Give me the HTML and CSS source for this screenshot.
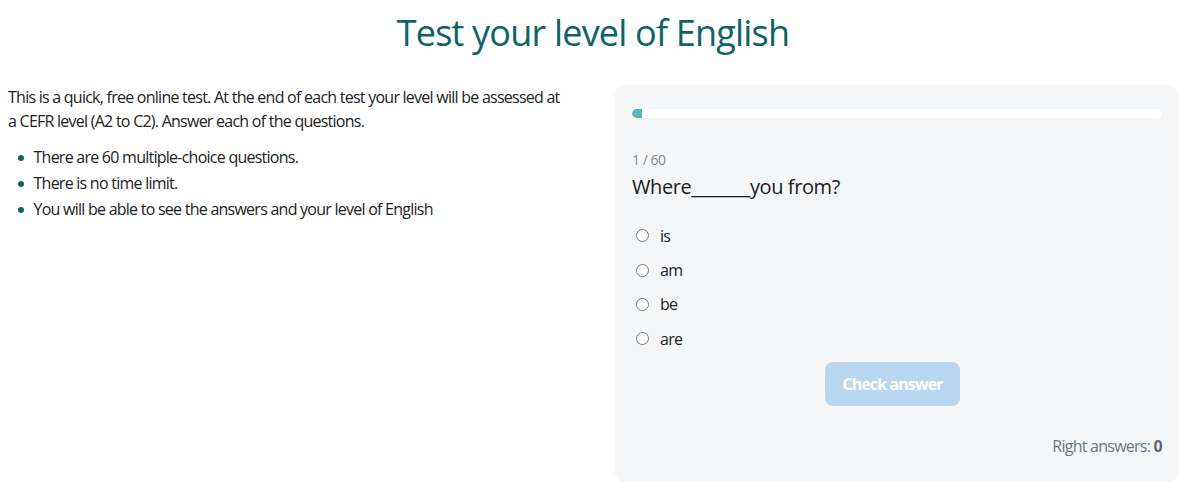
FILE: index.html
```html
<!DOCTYPE html>
<html lang="en">
<head>
<meta charset="utf-8">
<title>Test your level of English</title>
<link rel="stylesheet" href="styles.css">
</head>
<body>
<div class="page">
  <h1 class="title">Test your level of English</h1>
  <div class="columns">
    <div class="intro">
      <p class="lead">This is a quick, free online test. At the end of each test your level will be assessed at a CEFR level (A2 to C2). Answer each of the questions.</p>
      <ul class="facts">
        <li>There are 60 multiple-choice questions.</li>
        <li>There is no time limit.</li>
        <li>You will be able to see the answers and your level of English</li>
      </ul>
    </div>
    <div class="quiz">
      <div class="progress"><div class="progress-fill" style="width: 10px"></div></div>
      <div class="counter">1 / 60</div>
      <div class="question">Where_______you from?</div>
      <div class="options">
        <label class="option"><span class="radio"></span><span>is</span></label>
        <label class="option"><span class="radio"></span><span>am</span></label>
        <label class="option"><span class="radio"></span><span>be</span></label>
        <label class="option"><span class="radio"></span><span>are</span></label>
      </div>
      <div class="actions"><button class="check" type="button">Check answer</button></div>
      <div class="score">Right answers: <b>0</b></div>
    </div>
  </div>
</div>
</body>
</html>
```
FILE: styles.css
```css
* { box-sizing: border-box; }
html, body { margin: 0; padding: 0; background: #fff; }
body {
  font-family: "Open Sans", "Noto Sans", sans-serif;
  color: #222;
  font-size: 16px;
  line-height: 24px;
  letter-spacing: -0.75px;
}
.page {
  width: 1186px;
  padding: 11.4px 8px 0 8px;
}
.title {
  margin: 0 0 30.4px 0;
  font-size: 36px;
  line-height: 43.2px;
  font-weight: 400;
  color: #0e6367;
  text-align: center;
  letter-spacing: -0.8px;
}
.columns {
  display: grid;
  grid-template-columns: 584px 563px;
  column-gap: 23px;
  align-items: start;
}
.intro { width: 558px; }
.lead { margin: 0 0 12px 0; }
.facts {
  list-style: none;
  margin: 0;
  padding: 0;
}
.facts li {
  position: relative;
  padding-left: 25.5px;
  margin-bottom: 2px;
}
.facts li::before {
  content: "";
  position: absolute;
  left: 9.5px;
  top: 10px;
  width: 6px;
  height: 6px;
  border-radius: 50%;
  background: #0e6367;
}
.quiz {
  background: #f5f6f8;
  border-radius: 10px;
  box-shadow: 0 0 3px rgba(0,0,0,0.04);
  padding: 24px 16px 24px 17px;
  height: 397px;
}
.progress {
  height: 9px;
  background: #fff;
  border-radius: 5px;
  box-shadow: 0 0 2px rgba(0,0,0,0.05);
  overflow: hidden;
}
.progress-fill {
  height: 100%;
  background: #5cb5b8;
  border-radius: 5px 0 0 5px;
}
.counter {
  margin-top: 31.6px;
  font-size: 14px;
  line-height: 20px;
  color: #8a8a8a;
  letter-spacing: -0.5px;
}
.question {
  margin-top: 3.6px;
  font-size: 20px;
  line-height: 28px;
  color: #1a1a1a;
  letter-spacing: -0.4px;
}
.options {
  margin-top: 22.6px;
  display: flex;
  flex-direction: column;
  gap: 10.3px;
}
.option {
  display: flex;
  align-items: center;
  height: 24px;
  color: #222;
}
.radio {
  width: 13px;
  height: 13px;
  border: 1px solid #767676;
  border-radius: 50%;
  background: #fff;
  margin-left: 4px;
  margin-right: 11px;
}
.actions {
  margin-top: 11.2px;
  padding-left: 193px;
}
.check {
  width: 135px;
  height: 44px;
  border: 0;
  border-radius: 8px;
  background: #b9d7f0;
  color: #fff;
  font-family: "Open Sans", "Noto Sans", sans-serif;
  font-weight: 700;
  font-size: 16px;
  letter-spacing: -0.9px;
  padding: 0;
}
.score {
  margin-top: 27.8px;
  text-align: right;
  color: #6f767d;
}
.score b { color: #5f666d; }
```
